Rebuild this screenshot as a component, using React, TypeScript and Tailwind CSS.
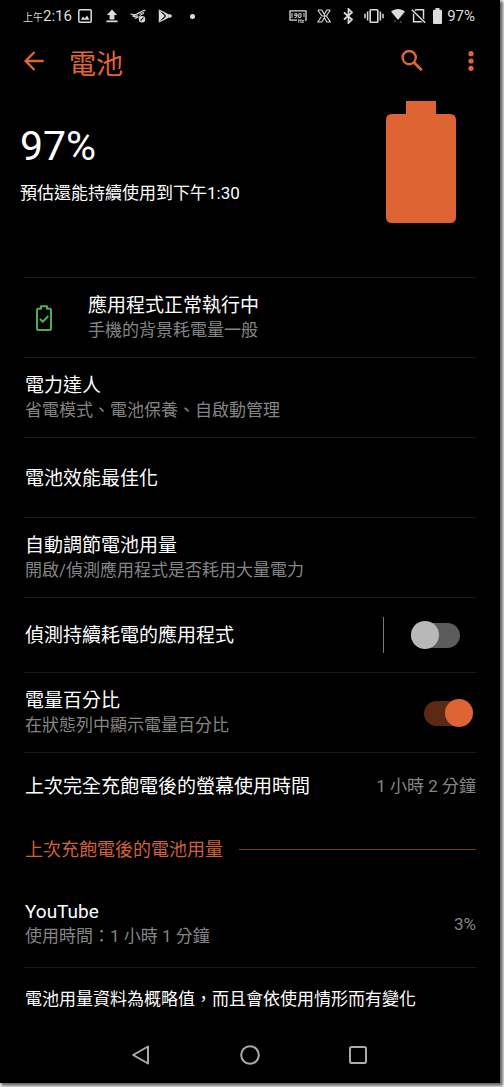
import { useState, type ReactNode } from "react";

function StatusBar() {
  return (
    <div className="flex h-8 items-center justify-between pl-[23px] pr-[25px] text-[15px] leading-5 text-[#dcdcdc]">
      <div className="flex items-center">
        <span className="flex items-baseline">
          <span className="text-[10px] leading-none">上午</span>
          <span>2:16</span>
        </span>
        <svg className="ml-[6px] h-[14px] w-[14px]" viewBox="0 0 14 14" aria-hidden="true">
          <rect x="0.8" y="0.8" width="12.4" height="12.4" rx="1.2" fill="none" stroke="currentColor" strokeWidth="1.5" />
          <path d="M3 10.800 5 7.600l1.800 1.800L9 6.500l2.400 4.300Z" fill="currentColor" />
        </svg>
        <svg className="ml-[14px] h-[14px] w-[12px]" viewBox="0 0 12 14" aria-hidden="true">
          <path d="M6 .5 11.200 6H8.400v4.400H3.600V6H.8ZM.4 11.600h11.200v1.700H.4Z" fill="currentColor" />
        </svg>
        <svg className="ml-[12px] h-[14px] w-4" viewBox="0 0 16 14" aria-hidden="true">
          <path d="M.5 4.800c2 1.200 4.500 1.200 6.500.2 2.500-1.300 5-3.300 8.300-3.800M2.500 6.800c2 .8 3.800.6 5.200-.3M4.500 9c1.500.2 2.800-.2 4-1.200" fill="none" stroke="currentColor" strokeWidth="1.300" />
          <path d="M8.500 6.200C10.500 4 12.500 2.800 15 2.400L13 4.200c-1.500.3-3 1.300-4.500 2Z" fill="currentColor" />
          <path d="M9 8c1-2 2.500-3 5-3.400" fill="none" stroke="currentColor" strokeWidth="1" />
          <circle cx="12" cy="10.200" r="3.200" fill="currentColor" />
          <path d="m10.500 11.700 3-3" stroke="#000" strokeWidth="1.100" />
        </svg>
        <svg className="ml-[12px] h-[14px] w-[14px]" viewBox="0 0 14 14" aria-hidden="true">
          <path d="M.8 1v12l6-6Z" fill="currentColor" />
          <path d="m1 1 11.500 6L1 13M5.500 3l5 5.500M5.500 11l5-5.500" fill="none" stroke="currentColor" strokeWidth="1.300" />
          <circle cx="12" cy="7" r="1.700" fill="currentColor" />
        </svg>
        <span className="ml-[18px] h-[5px] w-[5px] rounded-full bg-[#dcdcdc]" />
      </div>
      <div className="flex items-center">
        <svg className="h-[14px] w-[18px]" viewBox="0 0 18 14" aria-hidden="true">
          <path d="M8 11.200H1V1.800h16v9.400h-1" fill="none" stroke="currentColor" strokeWidth="1.300" />
          <path d="M3 4v5M15 4v4" stroke="currentColor" strokeWidth="1" />
          <text x="4.800" y="9" fontSize="7" fontStyle="italic" fontWeight="700" fill="currentColor">90</text>
          <text x="9" y="14" fontSize="5" fontWeight="700" fill="currentColor">Hz</text>
        </svg>
        <svg className="ml-[10px] h-[14px] w-[14px]" viewBox="0 0 14 14" aria-hidden="true">
          <path d="M.8 1h4l3.400 6-3.400 6h-4l3.600-5.200M.8 1l4 6M13.300 1H9.800L7.600 4.800M13.300 1 9.400 7l3.900 6H9.800L7.600 9.200M4.800 7h4.600" fill="none" stroke="currentColor" strokeWidth="1.100" />
        </svg>
        <svg className="ml-[12px] h-4 w-[11px]" viewBox="0 0 11 16" aria-hidden="true">
          <path d="m1 4.500 8 7L5.500 15V1L9 4.500l-8 7" fill="none" stroke="currentColor" strokeWidth="1.700" />
        </svg>
        <svg className="ml-[10px] h-[14px] w-5" viewBox="0 0 20 14" aria-hidden="true">
          <rect x="6.200" y="0.800" width="7.600" height="12.400" rx="0.800" fill="none" stroke="currentColor" strokeWidth="1.600" />
          <path d="M3.600 2.500v9M16.400 2.500v9M1 4.800v4.400M19 4.800v4.400" stroke="currentColor" strokeWidth="1.500" />
        </svg>
        <svg className="ml-[7px] h-[14px] w-[14px]" viewBox="0 0 14 14" aria-hidden="true">
          <path d="M0 2.600C4-.8 10-.8 14 2.600L7 11Z" fill="currentColor" />
          <path d="M2.500 11.500h3L4 13.500ZM8.300 13.500h3l-1.500-2Z" fill="#555" />
        </svg>
        <svg className="ml-[6px] h-4 w-[15px]" viewBox="0 0 15 16" aria-hidden="true">
          <path d="M5 1.700h7.500v12H2.600V4.300Z" fill="none" stroke="currentColor" strokeWidth="1.500" />
          <path d="m.8 1.800 13.400 13" stroke="#000" strokeWidth="3.200" />
          <path d="m.8 1.800 13.400 13" stroke="currentColor" strokeWidth="1.600" />
        </svg>
        <svg className="ml-[7px] h-4 w-[9px]" viewBox="0 0 9 16" aria-hidden="true">
          <path d="M2.500 0h4v1.800H8q1 0 1 1V15q0 1-1 1H1q-1 0-1-1V2.800q0-1 1-1h1.500Z" fill="currentColor" />
        </svg>
        <span className="ml-[5px]">97%</span>
      </div>
    </div>
  );
}

function AppBar() {
  return (
    <header className="flex h-[58px] items-center pl-6 pr-[26px] text-[#e06633]">
      <button type="button" aria-label="返回" className="h-5 w-5">
        <svg className="h-5 w-5" viewBox="0 0 20 20" fill="none" stroke="currentColor" strokeWidth="2.400">
          <path d="M19.700 10H2M10.500 1 1.600 10l8.900 9" />
        </svg>
      </button>
      <h1 className="ml-[25px] mt-2 text-[27px] font-normal leading-9">電池</h1>
      <button type="button" aria-label="搜尋" className="ml-auto h-[22px] w-[22px]">
        <svg className="h-[22px] w-[22px]" viewBox="0 0 22 22" fill="none" stroke="currentColor">
          <circle cx="8.200" cy="7.600" r="6.600" strokeWidth="2.400" />
          <path d="m13 12.400 7.800 7.800" strokeWidth="2.800" />
        </svg>
      </button>
      <button type="button" aria-label="更多選項" className="ml-[45px] h-5 w-[6px]">
        <svg className="h-5 w-[6px]" viewBox="0 0 6 20" fill="currentColor">
          <circle cx="3" cy="2.700" r="2.600" />
          <circle cx="3" cy="10" r="2.600" />
          <circle cx="3" cy="17.300" r="2.600" />
        </svg>
      </button>
    </header>
  );
}

function Summary() {
  return (
    <section className="flex min-h-[187px] items-start justify-between pl-5 pr-11">
      <div className="pt-8">
        <p className="text-[41px] leading-[48px]">97%</p>
        <p className="mt-[10px] text-[17px] leading-[26px]">預估還能持續使用到下午1:30</p>
      </div>
      <svg className="mt-[11px] h-[122px] w-[70px]" viewBox="0 0 70 122" fill="#df6434" aria-hidden="true">
        <path d="M20 0h30v13h14q6 0 6 6v97q0 6-6 6H6q-6 0-6-6V19q0-6 6-6h14Z" />
      </svg>
    </section>
  );
}

function RowText({ title, detail }: { title: string; detail?: string }) {
  return (
    <span className="block">
      <span className="block text-[19px] leading-[25px] text-white">{title}</span>
      {detail && <span className="block text-[17px] leading-[25px] text-[#858585]">{detail}</span>}
    </span>
  );
}

function LinkRow({ title, detail, icon }: { title: string; detail?: string; icon?: ReactNode }) {
  return (
    <li className="border-t border-[#1a1a1a]">
      <button type="button" className="flex min-h-[79px] w-full items-center pl-px pt-px text-left">
        {icon}
        <RowText title={title} detail={detail} />
      </button>
    </li>
  );
}

function Switch({ id, checked, onChange }: { id: string; checked: boolean; onChange: (value: boolean) => void }) {
  return (
    <input
      id={id}
      type="checkbox"
      role="switch"
      checked={checked}
      onChange={(event) => onChange(event.target.checked)}
      className="flex h-[25px] w-[49px] shrink-0 appearance-none items-center rounded-full bg-[#5c5c5c] before:h-7 before:w-7 before:shrink-0 before:rounded-full before:bg-[#b8b8b8] checked:justify-end checked:bg-[#5c2915] checked:before:bg-[#df6434]"
    />
  );
}

function HealthyBatteryIcon() {
  return (
    <svg className="ml-[11px] mr-9 h-[26px] w-4" viewBox="0 0 16 26" fill="none" stroke="#4caf50" strokeWidth="2" aria-hidden="true">
      <path d="M5 1.200h6v2.600h3q1 0 1 1V24q0 1-1 1H2q-1 0-1-1V4.800q0-1 1-1h3Z" strokeLinejoin="round" />
      <path d="m4 14 2.800 2.800L12.300 11" />
    </svg>
  );
}

function NavigationBar() {
  return (
    <nav className="flex h-[53px] items-center justify-center gap-[88px] pb-1 text-[#ababab]">
      <button type="button" aria-label="上一頁" className="h-5 w-5">
        <svg className="h-5 w-5" viewBox="0 0 20 20" fill="none" stroke="currentColor" strokeWidth="2" strokeLinejoin="round">
          <path d="M1.200 10 16 1.500v17Z" />
        </svg>
      </button>
      <button type="button" aria-label="主畫面" className="h-5 w-5">
        <svg className="h-5 w-5" viewBox="0 0 20 20" fill="none" stroke="currentColor" strokeWidth="2">
          <circle cx="10" cy="10" r="8.800" />
        </svg>
      </button>
      <button type="button" aria-label="最近使用" className="h-5 w-5">
        <svg className="h-5 w-5" viewBox="0 0 20 20" fill="none" stroke="currentColor" strokeWidth="2">
          <rect x="2" y="2" width="16" height="16" rx="1.800" />
        </svg>
      </button>
    </nav>
  );
}

export default function App() {
  const [detectDrain, setDetectDrain] = useState(false);
  const [showPercent, setShowPercent] = useState(true);

  return (
    <div className="bg-white pb-1 pr-1 font-[Roboto,'Noto_Sans_CJK_TC',sans-serif]">
      <div className="bg-black text-white shadow-[2px_2px_3px_1px_#666]">
        <StatusBar />
        <AppBar />
        <main>
          <Summary />
          <ul className="mx-6">
            <LinkRow title="應用程式正常執行中" detail="手機的背景耗電量一般" icon={<HealthyBatteryIcon />} />
            <LinkRow title="電力達人" detail="省電模式、電池保養、自啟動管理" />
            <LinkRow title="電池效能最佳化" />
            <LinkRow title="自動調節電池用量" detail="開啟/偵測應用程式是否耗用大量電力" />
            <li className="flex min-h-[75px] items-center justify-between border-t border-[#1a1a1a] pl-px pr-4">
              <label htmlFor="detect-drain">
                <RowText title="偵測持續耗電的應用程式" />
              </label>
              <span className="flex items-center gap-[27px]">
                <span className="h-9 w-px bg-[#777]" />
                <Switch id="detect-drain" checked={detectDrain} onChange={setDetectDrain} />
              </span>
            </li>
            <li className="flex min-h-20 items-center justify-between border-t border-[#1a1a1a] pl-px pr-[3px] pt-px">
              <label htmlFor="show-percent">
                <RowText title="電量百分比" detail="在狀態列中顯示電量百分比" />
              </label>
              <Switch id="show-percent" checked={showPercent} onChange={setShowPercent} />
            </li>
            <li className="flex min-h-[68px] items-center justify-between border-t border-[#1a1a1a] pl-px">
              <RowText title="上次完全充飽電後的螢幕使用時間" />
              <span className="text-[17px] leading-[25px] text-[#858585]">1 小時 2 分鐘</span>
            </li>
          </ul>
          <section className="mx-6">
            <div className="flex min-h-[58px] items-center gap-4 pl-px">
              <h2 className="text-[18px] font-normal leading-[25px] text-[#d0603a]">上次充飽電後的電池用量</h2>
              <span className="h-px flex-1 bg-[#753d2a]" />
            </div>
            <button type="button" className="flex min-h-[89px] w-full items-center justify-between pl-px pt-[3px] text-left">
              <RowText title="YouTube" detail="使用時間：1 小時 1 分鐘" />
              <span className="text-[17px] leading-[25px] text-[#858585]">3%</span>
            </button>
            <p className="flex min-h-[63px] items-center border-t border-[#1a1a1a] pl-px text-[17px] leading-[25px]">
              電池用量資料為概略值，而且會依使用情形而有變化
            </p>
          </section>
        </main>
        <NavigationBar />
      </div>
    </div>
  );
}
